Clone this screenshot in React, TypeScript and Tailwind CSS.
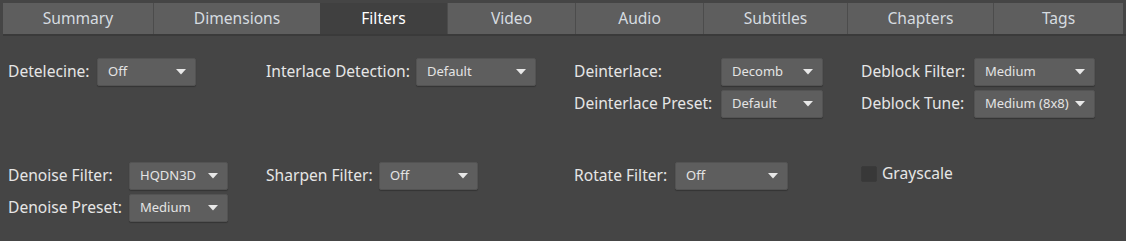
import React from "react";

const tabs: { name: string; w: number; active?: boolean }[] = [
  { name: "Summary", w: 150 },
  { name: "Dimensions", w: 167 },
  { name: "Filters", w: 127, active: true },
  { name: "Video", w: 128 },
  { name: "Audio", w: 128 },
  { name: "Subtitles", w: 144 },
  { name: "Chapters", w: 146 },
  { name: "Tags", w: 130 },
];

function Arrow() {
  return (
    <svg width="10" height="6" viewBox="0 0 10 6" className="shrink-0">
      <path d="M0 0 L10 0 L5 5.5 Z" fill="#e8e8e8" />
    </svg>
  );
}

function Combo({ value, w }: { value: string; w: number }) {
  return (
    <div
      className="flex h-[28px] shrink-0 items-center justify-between gap-[4px] rounded-[2px] border border-[#535353] bg-[#5e5e5e] pl-[10px] pr-[9px] text-[13px] text-[#e4e4e4] shadow-[0_1px_1px_rgba(0,0,0,0.25)]"
      style={{ width: w }}
    >
      <span className="whitespace-nowrap">{value}</span>
      <Arrow />
    </div>
  );
}

function Field({ label, lw, value, cw }: { label: string; lw: number; value: string; cw: number }) {
  return (
    <div className="flex items-center">
      <span className="shrink-0 text-[15.6px] text-[#e6e6e6]" style={{ width: lw }}>
        {label}
      </span>
      <Combo value={value} w={cw} />
    </div>
  );
}

export default function App() {
  return (
    <div
      className="h-[241px] w-[1126px] overflow-hidden bg-[#454545]"
      style={{ fontFamily: '"Noto Sans", "Open Sans", sans-serif' }}
    >
      <div className="pl-[3px] pt-[3px]">
        <div className="flex h-[33px] border-b-[2px] border-[#3a3a3a]">
          {tabs.map((t, i) => (
            <div
              key={t.name}
              className={
                t.active
                  ? "flex items-center justify-center bg-[#404040] text-[15.6px] text-white"
                  : "flex items-center justify-center border-l border-[#4c4c4c] bg-[#5e5e5e] text-[15.6px] text-[#d6dce0]"
              }
              style={{ width: t.w, borderLeftWidth: i === 0 || t.active ? 0 : 1 }}
            >
              <span className="pt-[1px]">{t.name}</span>
            </div>
          ))}
        </div>
      </div>

      <div className="flex pl-[8px] pt-[22px]">
        <div className="w-[258px]">
          <Field label="Detelecine:" lw={89} value="Off" cw={99} />
        </div>
        <div className="w-[308px]">
          <Field label="Interlace Detection:" lw={150} value="Default" cw={120} />
        </div>
        <div className="flex w-[287px] flex-col gap-[4px]">
          <Field label="Deinterlace:" lw={147} value="Decomb" cw={102} />
          <Field label="Deinterlace Preset:" lw={147} value="Default" cw={102} />
        </div>
        <div className="flex flex-col gap-[4px]">
          <Field label="Deblock Filter:" lw={113} value="Medium" cw={121} />
          <Field label="Deblock Tune:" lw={113} value="Medium (8x8)" cw={121} />
        </div>
      </div>

      <div className="flex pl-[8px] pt-[44px]">
        <div className="flex w-[258px] flex-col gap-[4px]">
          <Field label="Denoise Filter:" lw={121} value="HQDN3D" cw={99} />
          <Field label="Denoise Preset:" lw={121} value="Medium" cw={99} />
        </div>
        <div className="w-[308px]">
          <Field label="Sharpen Filter:" lw={113} value="Off" cw={99} />
        </div>
        <div className="w-[287px]">
          <Field label="Rotate Filter:" lw={101} value="Off" cw={113} />
        </div>
        <div>
          <div className="flex items-center gap-[5px]">
            <div className="h-[16px] w-[16px] rounded-[2px] border border-[#3a3a3a] bg-[#383838]" />
            <span className="text-[15.6px] text-[#e6e6e6]">Grayscale</span>
          </div>
        </div>
      </div>
    </div>
  );
}
